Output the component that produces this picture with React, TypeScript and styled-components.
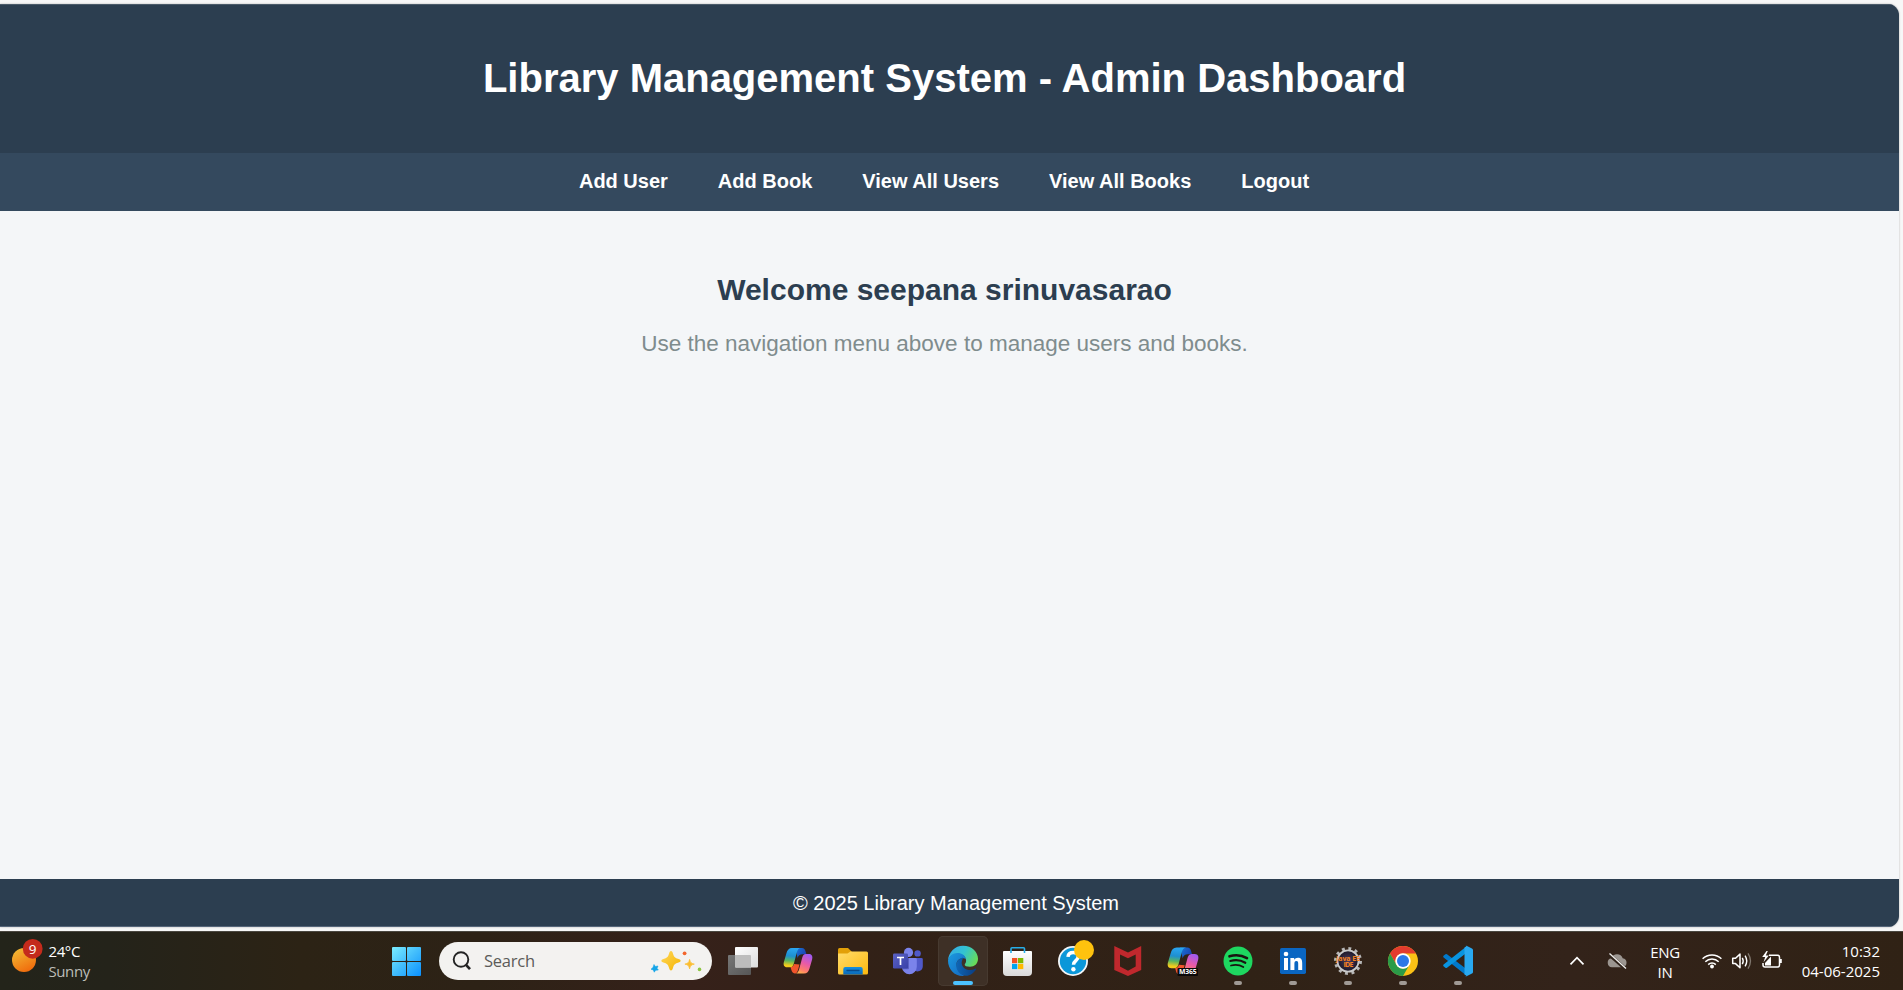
import React from "react";
import styled, { createGlobalStyle } from "styled-components";

const GlobalStyle = createGlobalStyle`
  * { box-sizing: border-box; }
  html, body { margin: 0; padding: 0; }
  body {
    overflow: hidden;
    background: #f7f7f7;
    font-family: "Liberation Sans", Arial, sans-serif;
  }
  svg { display: block; flex: none; }
`;

const Screen = styled.div`
  width: 1903px;
  height: 990px;
  display: flex;
  flex-direction: column;
  overflow: hidden;
`;

const Browser = styled.div`
  flex: none;
  height: 931px;
  padding: 4px 4px 4px 0;
  background: #f7f7f7;
`;

const Page = styled.div`
  height: 923px;
  display: flex;
  flex-direction: column;
  border-radius: 0 11px 11px 0;
  overflow: hidden;
  background: #f4f6f8;
  box-shadow: 0 0 2px rgba(0, 0, 0, 0.3);
  text-align: center;
`;

const Header = styled.header`
  height: 149px;
  padding: 51px 10px 0 0;
  background: #2c3e50;
  box-shadow: inset 0 1px 0 #4b5b6a;
`;

const Title = styled.h1`
  margin: 0;
  color: #fff;
  font-size: 40px;
  line-height: 46px;
`;

const Nav = styled.nav`
  height: 58px;
  padding: 16px 11px 0 0;
  display: flex;
  justify-content: center;
  gap: 50px;
  background: #34495e;
`;

const NavLink = styled.a`
  color: #fff;
  font-size: 20px;
  font-weight: bold;
  line-height: 24px;
  text-decoration: none;
`;

const Main = styled.main`
  flex: 1;
  padding: 62px 10px 0 0;
`;

const Welcome = styled.h2`
  margin: 0 0 24px;
  color: #2c3e50;
  font-size: 30px;
  line-height: 34px;
`;

const Hint = styled.p`
  margin: 0;
  color: #7f8c8d;
  font-size: 22.5px;
  line-height: 26px;
`;

const Footer = styled.footer`
  height: 48px;
  padding: 12px 0 0 13px;
  background: #2c3e50;
  box-shadow: inset 0 -1px 0 #56667a;
  color: #fff;
  font-size: 20px;
  line-height: 24px;
`;

const Taskbar = styled.div`
  flex: none;
  height: 59px;
  display: flex;
  align-items: stretch;
  border-top: 1px solid #4a4740;
  background: linear-gradient(90deg, #23241a 0, #24231a 110px, #2c2315 300px, #2d2216 480px, #36211a 690px, #322117 850px, #302216 1250px, #33231a 1570px, #302215 1903px);
  color: #fff;
  font-family: "Open Sans", "Noto Sans", sans-serif;
  font-size: 15px;
  line-height: 20px;
`;

const Weather = styled.div`
  width: 381px;
  display: flex;
  padding-left: 8px;
`;

const WeatherText = styled.div`
  padding: 9px 0 0 4.5px;
  letter-spacing: -0.4px;
`;

const Muted = styled.div`
  color: #bdbdb8;
`;

const Search = styled.div`
  width: 273px;
  height: 38px;
  margin: 10px 6px 0 8px;
  padding: 0 10.5px 0 12px;
  display: flex;
  align-items: center;
  border-radius: 19px;
  background: #f3f2f0;
  color: #5c5b59;
  font-size: 16.5px;
`;

const SearchLabel = styled.span`
  flex: 1;
  padding-left: 13px;
  letter-spacing: -0.25px;
`;

const Apps = styled.div`
  display: flex;
  gap: 5px;
  padding-top: 4px;
`;

const AppSlot = styled.div<{ $active?: boolean }>`
  width: 50px;
  height: 50px;
  border-radius: 5px;
  background: ${(p) => (p.$active ? "#3e3026" : "transparent")};
  box-shadow: ${(p) => (p.$active ? "inset 0 0 0 1px #473a30" : "none")};
`;

const Tray = styled.div`
  flex: 1;
  display: flex;
  padding: 0 23px 0 85px;
`;

const Language = styled.div`
  width: 40px;
  margin: 10px 15px 0 16px;
  text-align: center;
  letter-spacing: -0.3px;
`;

const Clock = styled.div`
  flex: 1;
  padding-top: 9px;
  text-align: right;
  white-space: nowrap;
`;

const SlotIcon = ({ children, running }: { children: React.ReactNode; running?: boolean }) => (
  <svg width="50" height="50" viewBox="0 0 50 50">
    {children}
    {running && <rect x="21" y="45" width="8" height="4" rx="2" fill="#a09a95" />}
  </svg>
);

const CopilotShape = () => (
  <>
    <defs>
      <linearGradient id="cpA" x1="0.3" y1="0" x2="0.2" y2="1">
        <stop offset="0" stopColor="#2aa5f0" />
        <stop offset="0.4" stopColor="#1e8fd0" />
        <stop offset="0.65" stopColor="#58b560" />
        <stop offset="0.9" stopColor="#f3cc1c" />
      </linearGradient>
      <linearGradient id="cpB" x1="0.7" y1="0" x2="0.3" y2="1">
        <stop offset="0" stopColor="#a05bf0" />
        <stop offset="0.45" stopColor="#e85aa8" />
        <stop offset="0.8" stopColor="#ff7d6a" />
        <stop offset="1" stopColor="#ffb04d" />
      </linearGradient>
      <linearGradient id="cpC" x1="0" y1="0" x2="1" y2="0.6">
        <stop offset="0" stopColor="#1979d8" />
        <stop offset="1" stopColor="#1a3fb0" />
      </linearGradient>
    </defs>
    <path d="M22 12h7c2 0 3 1.500 3.500 3.200l.9 3.100h-4c-2.600 0-4 1.200-4.800 3.800L23 15Z" fill="url(#cpC)" />
    <path d="M17.500 31c2 0 3-1 3.600-3l5.400.500-1.500 5.500c-.5 1.900-1.300 3.400-3.300 3.400-2 0-2.800-1.600-3.300-3.400Z" fill="#f2552c" />
    <path d="M19 12h9c-2.500 0-3.500 2-4.200 4.500L21 27c-.6 2.200-1.500 4.300-4 4.300h-3c-3 0-3.900-2.600-3.100-5.300l2.600-9c.8-3 2.500-5 5.500-5Z" fill="url(#cpA)" />
    <path d="M31 37.400h-9c2.500 0 3.500-2 4.200-4.500L29 22.400c.6-2.200 1.500-4.300 4-4.300h3c3 0 3.900 2.600 3.100 5.300l-2.600 9c-.8 3-2.500 5-5.500 5Z" fill="url(#cpB)" />
  </>
);

const StartIcon = () => (
  <SlotIcon>
    <defs>
      <linearGradient id="win" gradientUnits="userSpaceOnUse" x1="11" y1="11" x2="40" y2="40">
        <stop offset="0" stopColor="#7bedff" />
        <stop offset="0.5" stopColor="#42bdfc" />
        <stop offset="1" stopColor="#0a90ff" />
      </linearGradient>
    </defs>
    <g fill="url(#win)">
      <rect x="11" y="11" width="14" height="14" rx="1" />
      <rect x="26" y="11" width="14" height="14" rx="1" />
      <rect x="11" y="26" width="14" height="14" rx="1" />
      <rect x="26" y="26" width="14" height="14" rx="1" />
    </g>
  </SlotIcon>
);

const TaskViewIcon = () => (
  <SlotIcon>
    <defs>
      <linearGradient id="tvD" x1="0" y1="0" x2="1" y2="1">
        <stop offset="0" stopColor="#777" /><stop offset="1" stopColor="#565656" />
      </linearGradient>
      <linearGradient id="tvL" x1="0" y1="0" x2="1" y2="1">
        <stop offset="0" stopColor="#fff" /><stop offset="1" stopColor="#dcdcdc" />
      </linearGradient>
    </defs>
    <rect x="10" y="19" width="23" height="20" rx="1" fill="url(#tvD)" />
    <rect x="17" y="11" width="23" height="20.500" rx="1" fill="url(#tvL)" />
    <path d="M17 19h15a1 1 0 0 1 1 1v11.500H18a1 1 0 0 1-1-1Z" fill="#bdbdbd" />
  </SlotIcon>
);

const CopilotIcon = () => <SlotIcon><CopilotShape /></SlotIcon>;

const FolderIcon = () => (
  <SlotIcon>
    <defs>
      <linearGradient id="fo" x1="0" y1="0" x2="1" y2="1">
        <stop offset="0" stopColor="#ffdc6b" /><stop offset="1" stopColor="#fcb90f" />
      </linearGradient>
      <linearGradient id="foB" x1="0" y1="0" x2="0" y2="1">
        <stop offset="0" stopColor="#1490df" /><stop offset="1" stopColor="#0a68b8" />
      </linearGradient>
    </defs>
    <path d="M10 13.500a1.500 1.500 0 0 1 1.500-1.500h8.500l3.500 3.500V20H10Z" fill="#e2a008" />
    <path d="M10 17.500h9.500l3-2h16a1.500 1.500 0 0 1 1.500 1.500v20a1.500 1.500 0 0 1-1.500 1.500h-27a1.500 1.500 0 0 1-1.500-1.500Z" fill="url(#fo)" />
    <path d="M15.300 38.500v-5.500a2 2 0 0 1 2-2h15.400a2 2 0 0 1 2 2v5.500Z" fill="url(#foB)" />
    <path d="M19 34.500h12" stroke="#074a8c" strokeWidth="1.300" strokeLinecap="round" />
  </SlotIcon>
);

const TeamsIcon = () => (
  <SlotIcon>
    <defs>
      <linearGradient id="te" x1="0" y1="0" x2="1" y2="1">
        <stop offset="0" stopColor="#5a62c4" /><stop offset="1" stopColor="#3940a8" />
      </linearGradient>
    </defs>
    <circle cx="34.600" cy="17.400" r="3.200" fill="#5059c9" />
    <path d="M31 22h7.500a1.300 1.300 0 0 1 1.300 1.300v7a5.200 5.200 0 0 1-9 3.500Z" fill="#5059c9" />
    <circle cx="25.500" cy="16.400" r="4.600" fill="#7b83eb" />
    <path d="M19 22h13.500a1.300 1.300 0 0 1 1.300 1.300v7.500a7.400 7.400 0 0 1-14.800 0Z" fill="#7b83eb" />
    <path d="M19 22h7v10.300a1 1 0 0 1-1 1h-5.500L19 31Z" fill="#5a61c0" />
    <rect x="10" y="17.600" width="15" height="15" rx="1.300" fill="url(#te)" />
    <path d="M14 21.500h7M17.500 21.500v7.500" stroke="#fff" strokeWidth="1.700" fill="none" />
  </SlotIcon>
);

const EdgeIcon = () => (
  <SlotIcon>
    <defs>
      <linearGradient id="edT" x1="0" y1="0.2" x2="1" y2="0.6">
        <stop offset="0" stopColor="#35a9e8" /><stop offset="0.5" stopColor="#33c3d0" /><stop offset="1" stopColor="#68dc58" />
      </linearGradient>
      <linearGradient id="edB" x1="0" y1="0" x2="1" y2="1">
        <stop offset="0" stopColor="#1c9be0" /><stop offset="1" stopColor="#1366c0" />
      </linearGradient>
      <linearGradient id="edD" x1="0" y1="0" x2="1" y2="0">
        <stop offset="0" stopColor="#0f66b5" /><stop offset="1" stopColor="#0b3c80" />
      </linearGradient>
    </defs>
    <path d="M10 24.500C10.500 16 17 9.700 25 9.700c9 0 15 6.300 15 13 0 5-3.600 8-8 8-3.600 0-5.300-1-5.300-2 0-.9 1.400-1.500 1.400-4 0-4-4-7-8.600-7-5 0-8.500 3-9.500 6.800Z" fill="url(#edT)" />
    <path d="M10 24.500c.8-4.500 4.800-7.500 9.500-7.500 4.500 0 7.800 2.600 8.500 6-2.500-1.500-9-.5-9.500 5 0 5 3.500 9.700 8 11.900-9 1.200-16.500-6-16.500-15.400Z" fill="url(#edB)" />
    <path d="M25 21.500c-4 1-6.800 4-6.800 7.800 0 6 4.800 10.500 9.800 10.500 4 0 8-3 10-6.300.4-.8-.2-1.200-.8-.8-4.700 2.500-11.700 1.300-13.200-4-1-3.500 1-5.200 1-7.200Z" fill="url(#edD)" />
    <rect x="15" y="45" width="20" height="4" rx="2" fill="#4cc2ff" />
  </SlotIcon>
);

const StoreIcon = () => (
  <SlotIcon>
    <defs>
      <linearGradient id="st" x1="0" y1="0" x2="0" y2="1">
        <stop offset="0" stopColor="#fff" /><stop offset="1" stopColor="#d9d9d9" />
      </linearGradient>
    </defs>
    <path d="M18 17v-4.300a1 1 0 0 1 1-1h11.500a1 1 0 0 1 1 1V17" fill="none" stroke="#27aee8" strokeWidth="1.600" />
    <path d="M10 16a1 1 0 0 1 1-1h27a1 1 0 0 1 1 1v20a4 4 0 0 1-4 4H14a4 4 0 0 1-4-4Z" fill="url(#st)" />
    <rect x="19" y="22" width="5.300" height="5.200" fill="#f25022" />
    <rect x="25" y="22" width="5.300" height="5.200" fill="#7fba00" />
    <rect x="19" y="27.900" width="5.300" height="5.200" fill="#00a4ef" />
    <rect x="25" y="27.900" width="5.300" height="5.200" fill="#ffb900" />
    <path d="M18 15v2M31.500 15v2" stroke="#27aee8" strokeWidth="1.600" />
  </SlotIcon>
);

const HelpIcon = () => (
  <SlotIcon>
    <circle cx="25" cy="25" r="15" fill="#f4f6f8" />
    <circle cx="25" cy="25" r="13.200" fill="#0b97d9" />
    <path d="M20 20.800c.3-3 2.300-4.300 5.200-4.300 3 0 5 1.600 5 4.200 0 4-4.700 4-4.700 8" fill="none" stroke="#fff" strokeWidth="3.500" />
    <circle cx="25.400" cy="33.300" r="2.200" fill="#fff" />
    <circle cx="36" cy="14" r="10" fill="#ffc20e" />
  </SlotIcon>
);

const McAfeeIcon = () => (
  <SlotIcon>
    <path fillRule="evenodd" fill="#c0282d" d="M11.300 10 25 16.500 38.200 10v24L25 40l-13.700-6ZM17 18.500V30.500l8 4.300 7.700-4.300v-12L25 22.300Z" />
  </SlotIcon>
);

const BadgeText = styled.text`
  font-family: "Open Sans", sans-serif;
  font-weight: 700;
`;

const M365Icon = () => (
  <SlotIcon>
    <g transform="translate(-1.700 -1.300) scale(1.070)"><CopilotShape /></g>
    <rect x="19.500" y="32" width="20.500" height="8" rx="1" fill="#0c0908" />
    <BadgeText x="29.800" y="38.400" fontSize="6.800" textAnchor="middle" fill="#fff" textLength="17.500">M365</BadgeText>
  </SlotIcon>
);

const SpotifyIcon = () => (
  <SlotIcon running>
    <circle cx="25" cy="25" r="14.500" fill="#1ed760" />
    <g fill="none" stroke="#191410" strokeLinecap="round">
      <path d="M16.500 20.300c5.500-1.600 12.500-1 17.500 1.900" strokeWidth="2.600" />
      <path d="M17.300 25c5-1.400 10.700-.8 15 1.800" strokeWidth="2.200" />
      <path d="M18 29.500c4.200-1.100 8.700-.7 12.300 1.500" strokeWidth="1.800" />
    </g>
  </SlotIcon>
);

const LinkedInIcon = () => (
  <SlotIcon running>
    <rect x="12" y="12" width="26" height="26" rx="1.700" fill="#0a66c2" />
    <circle cx="18" cy="18" r="2.300" fill="#fff" />
    <path d="M16 22h4v12h-4ZM22.400 22h3.800v1.700c.8-1.300 2.100-2 3.800-2 3.400 0 4.200 2.200 4.200 5.400V34h-4v-6.200c0-1.600-.2-2.800-1.800-2.800-1.700 0-2 1.300-2 2.800V34h-4Z" fill="#fff" />
  </SlotIcon>
);

const EclipseIcon = () => (
  <SlotIcon running>
    <defs>
      <radialGradient id="ec">
        <stop offset="0" stopColor="#4d3b62" /><stop offset="1" stopColor="#1a1724" />
      </radialGradient>
    </defs>
    <circle cx="25" cy="25" r="12.500" fill="none" stroke="#b7b7b7" strokeWidth="3" strokeDasharray="2.900 3.645" />
    <circle cx="25" cy="25" r="10.600" fill="url(#ec)" stroke="#c9c9c9" strokeWidth="1.800" />
    <BadgeText x="25" y="24.800" fontSize="7" textAnchor="middle" fill="#f58220" textLength="24">Java EE</BadgeText>
    <BadgeText x="25.500" y="31" fontSize="7" textAnchor="middle" fill="#f58220" textLength="10">IDE</BadgeText>
  </SlotIcon>
);

const ChromeIcon = () => (
  <SlotIcon running>
    <circle cx="25" cy="25" r="15" fill="#fbc116" />
    <path d="M12 17.500A15 15 0 0 1 38 17.500H25a7.500 7.500 0 0 0-6.500 11.250Z" fill="#e33b2e" />
    <path d="M12 17.500 18.500 28.750A7.500 7.500 0 0 0 31.500 28.750L25 40A15 15 0 0 1 12 17.500Z" fill="#2b9b48" />
    <circle cx="25" cy="25" r="7.700" fill="#fff" />
    <circle cx="25" cy="25" r="6" fill="#2b78e8" />
  </SlotIcon>
);

const CodeIcon = () => (
  <SlotIcon running>
    <path d="M10.500 19.800 12.400 18.200a1.300 1.300 0 0 1 1.600 0L34 33.500V40L10.600 21.500a1.200 1.200 0 0 1-.1-1.700Z" fill="#0179cb" />
    <path d="M10.500 30.200 12.400 31.800a1.300 1.300 0 0 0 1.600 0L34 16.500V10L10.600 28.500a1.200 1.200 0 0 0-.1 1.700Z" fill="#0994e0" />
    <path d="M32 10.200a1.800 1.800 0 0 1 2-.2l5 2.400a1.800 1.800 0 0 1 1 1.600v22a1.800 1.800 0 0 1-1 1.600l-5 2.400a1.800 1.800 0 0 1-2-.3c.9.700 2 0 2-1V11.300c0-1-1.100-1.700-2-1.100Z" fill="#29a9f1" />
    <path d="M31.500 11.500 34 10v30l-2.500-1.500Z" fill="#29a9f1" />
  </SlotIcon>
);

const WeatherIcon = () => (
  <svg width="36" height="58" viewBox="8 932 36 58">
    <defs>
      <linearGradient id="sun" x1="0.200" y1="0" x2="0.700" y2="1">
        <stop offset="0" stopColor="#f2bb35" /><stop offset="1" stopColor="#f0690b" />
      </linearGradient>
    </defs>
    <circle cx="24" cy="960" r="12" fill="url(#sun)" />
    <circle cx="32.700" cy="948.800" r="9.900" fill="#c42b1c" />
    <text x="32.500" y="953.800" fontSize="13.500" textAnchor="middle" fill="#fff">9</text>
  </svg>
);

const MagnifierIcon = () => (
  <svg width="20" height="20" viewBox="0 0 20 20" fill="none" stroke="#242424">
    <circle cx="10" cy="8.500" r="7.300" strokeWidth="1.900" />
    <path d="m15 13.800 4 4.300" strokeWidth="2.700" />
  </svg>
);

const SparklesIcon = () => (
  <svg width="56" height="38" viewBox="0 0 56 38">
    <defs>
      <linearGradient id="spk" x1="0" y1="0" x2="1" y2="1">
        <stop offset="0" stopColor="#ffd75a" /><stop offset="1" stopColor="#f5b400" />
      </linearGradient>
    </defs>
    <path d="M25 9c1 0 1.500 1 2 2.700 1 3.300 1.700 4 5 5 1.500.5 2.600 1 2.600 2s-1.100 1.500-2.600 2c-3.300 1-4 1.700-5 5-.5 1.700-1 2.700-2 2.700s-1.500-1-2-2.700c-1-3.300-1.700-4-5-5-1.500-.5-2.600-1-2.600-2s1.100-1.500 2.600-2c3.300-1 4-1.700 5-5 .5-1.700 1-2.700 2-2.700Z" fill="url(#spk)" />
    <path d="M43.600 17.400c.7 3.200 1.500 4 4.700 4.700-3.200.7-4 1.500-4.700 4.700-.7-3.200-1.500-4-4.700-4.700 3.200-.7 4-1.500 4.700-4.700Z" fill="#fbbd2e" stroke="#fbbd2e" strokeWidth=".8" />
    <path d="m8 22.500 1.300 2 2.700-.5-1 2.300 1.300 1.700-2.700.2-1.300 2-1-2.300-2.300-.7 2-1.600Z" fill="#15a5e8" stroke="#15a5e8" strokeWidth=".6" />
    <circle cx="38.600" cy="11.300" r="1.900" fill="#f3652b" />
    <circle cx="53.500" cy="27.400" r="1.800" fill="#8dc641" />
  </svg>
);

const TrayIcons = () => (
  <svg width="61" height="58" viewBox="1568 932 61 58" fill="none">
    <path d="m1570.500 964.300 6.500-6.600 6.500 6.600" stroke="#fff" strokeWidth="1.700" />
    <path d="M1612 967.300a4.600 4.600 0 0 1-.6-9.100 6 6 0 0 1 11.300 0 4.600 4.600 0 0 1-.2 9.100Z" fill="#9b9590" />
    <path d="m1609 954.500 16 14" stroke="#30231a" strokeWidth="3.500" />
    <path d="m1609.500 953.500 16.500 15" stroke="#f1f0ef" strokeWidth="1.300" />
  </svg>
);

const StatusIcons = () => (
  <svg width="84" height="58" viewBox="1700 932 84 58" fill="none" stroke="#fff" strokeWidth="1.500">
    <path d="M1702.600 958.800a13.300 13.300 0 0 1 18.800 0M1705.300 961.800a9.500 9.500 0 0 1 13.400 0M1708.200 964.600a5.400 5.400 0 0 1 7.600 0" />
    <circle cx="1712" cy="966.500" r="1.900" fill="#fff" stroke="none" />
    <path d="M1732.700 958.300h2.800l4.500-4.200v13.700l-4.500-4.200h-2.800Z" strokeLinejoin="round" />
    <path d="M1742.300 957.900q1.800 3 0 6.200M1745.100 955.700q3.300 5.300 0 10.600" strokeWidth="1.400" />
    <path d="M1748 953.400q5 7.600 0 15.200" stroke="#80776e" strokeWidth="1.300" />
    <path d="M1769 955.200h8.500a2 2 0 0 1 2 2v7.800a2 2 0 0 1-2 2H1765a2 2 0 0 1-2-2v-2" />
    <path d="M1780 959h1.800v4h-1.800Z" fill="#fff" stroke="none" />
    <path d="M1765 965.500v-2.500l6-6.500v9Z" fill="#fff" stroke="none" />
    <path d="m1766.500 951-4.300 6h3l-1.700 5.300 5.300-6.700h-3l2-4.600Z" fill="#fff" stroke="none" />
  </svg>
);

const navItems = ["Add User", "Add Book", "View All Users", "View All Books", "Logout"];

const pinnedApps = [
  TaskViewIcon, CopilotIcon, FolderIcon, TeamsIcon, EdgeIcon, StoreIcon, HelpIcon,
  McAfeeIcon, M365Icon, SpotifyIcon, LinkedInIcon, EclipseIcon, ChromeIcon, CodeIcon,
];

export default function App() {
  return (
    <>
      <GlobalStyle />
      <Screen>
        <Browser>
          <Page>
            <Header>
              <Title>Library Management System - Admin Dashboard</Title>
            </Header>
            <Nav>
              {navItems.map((item) => (
                <NavLink key={item}>{item}</NavLink>
              ))}
            </Nav>
            <Main>
              <Welcome>Welcome seepana srinuvasarao</Welcome>
              <Hint>Use the navigation menu above to manage users and books.</Hint>
            </Main>
            <Footer>© 2025 Library Management System</Footer>
          </Page>
        </Browser>
        <Taskbar>
          <Weather>
            <WeatherIcon />
            <WeatherText>
              <div>24°C</div>
              <Muted>Sunny</Muted>
            </WeatherText>
          </Weather>
          <Apps>
            <AppSlot><StartIcon /></AppSlot>
          </Apps>
          <Search>
            <MagnifierIcon />
            <SearchLabel>Search</SearchLabel>
            <SparklesIcon />
          </Search>
          <Apps>
            {pinnedApps.map((Icon, i) => (
              <AppSlot key={i} $active={Icon === EdgeIcon}>
                <Icon />
              </AppSlot>
            ))}
          </Apps>
          <Tray>
            <TrayIcons />
            <Language>
              <div>ENG</div>
              <div>IN</div>
            </Language>
            <StatusIcons />
            <Clock>
              <div>10:32</div>
              <div>04-06-2025</div>
            </Clock>
          </Tray>
        </Taskbar>
      </Screen>
    </>
  );
}
